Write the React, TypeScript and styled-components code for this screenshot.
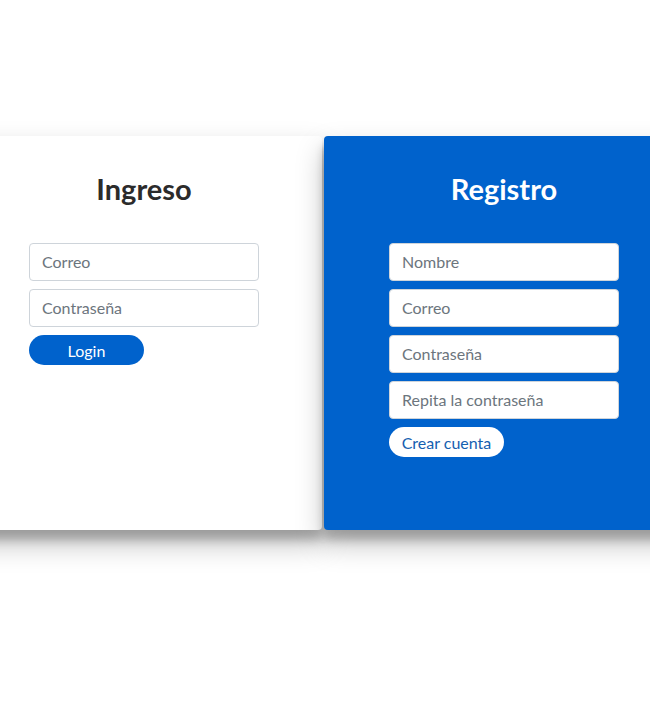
import React from 'react';
import styled, { createGlobalStyle } from 'styled-components';

const Global = createGlobalStyle`
  html, body { margin: 0; padding: 0; background: #ffffff; }
  body { font-family: Lato, "Noto Sans", sans-serif; overflow: hidden; }
  * { box-sizing: border-box; }
`;

const Page = styled.div`
  width: 650px;
  height: 719px;
  display: flex;
  align-items: flex-start;
  justify-content: center;
  gap: 2px;
  padding-top: 136px;
  overflow: hidden;
`;

const Card = styled.section<{ $blue?: boolean }>`
  flex: 0 0 ${(p) => (p.$blue ? '360px' : '356px')};
  height: 394px;
  padding: 36px 0 0;
  border-radius: 4px;
  background: ${(p) => (p.$blue ? '#0062cc' : '#ffffff')};
  box-shadow: 0 14px 28px rgba(0, 0, 0, 0.25), 0 10px 10px rgba(0, 0, 0, 0.22);
  display: flex;
  flex-direction: column;
  align-items: center;
`;

const Title = styled.h3<{ $light?: boolean }>`
  margin: 0 0 37px;
  font-size: 29px;
  line-height: 34px;
  font-weight: 700;
  color: ${(p) => (p.$light ? '#ffffff' : '#2b2b2b')};
`;

const Form = styled.form`
  width: 230px;
  display: flex;
  flex-direction: column;
  gap: 8px;
`;

const Input = styled.input`
  width: 100%;
  height: 38px;
  padding: 0 12px 1px;
  border: 1px solid #ced4da;
  border-radius: 4px;
  background: #ffffff;
  font-family: inherit;
  font-size: 16px;
  color: #495057;
  outline: none;
  &::placeholder { color: #6c757d; }
`;

const Button = styled.button<{ $inverse?: boolean }>`
  width: 115px;
  height: 30px;
  padding: 0 12px;
  border: none;
  border-radius: 15px;
  font-family: inherit;
  font-size: 16px;
  cursor: pointer;
  background: ${(p) => (p.$inverse ? '#ffffff' : '#0062cc')};
  color: ${(p) => (p.$inverse ? '#1560b0' : '#ffffff')};
`;

export default function App() {
  return (
    <>
      <Global />
      <Page>
        <Card>
          <Title>Ingreso</Title>
          <Form onSubmit={(e) => e.preventDefault()}>
            <Input type="email" placeholder="Correo" />
            <Input type="password" placeholder="Contraseña" />
            <Button type="submit">Login</Button>
          </Form>
        </Card>
        <Card $blue>
          <Title $light>Registro</Title>
          <Form onSubmit={(e) => e.preventDefault()}>
            <Input type="text" placeholder="Nombre" />
            <Input type="email" placeholder="Correo" />
            <Input type="password" placeholder="Contraseña" />
            <Input type="password" placeholder="Repita la contraseña" />
            <Button type="submit" $inverse>Crear cuenta</Button>
          </Form>
        </Card>
      </Page>
    </>
  );
}
